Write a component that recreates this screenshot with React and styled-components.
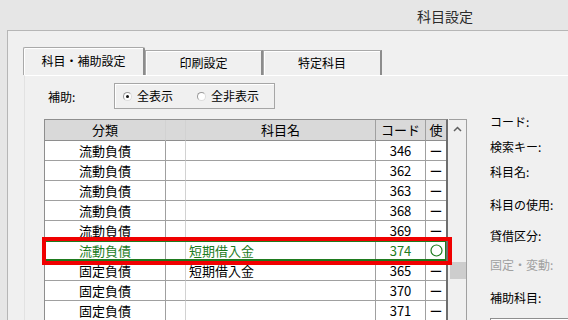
import React from 'react';
import styled, { createGlobalStyle } from 'styled-components';

const GlobalStyle = createGlobalStyle`
  html, body {
    margin: 0;
    padding: 0;
    background: #e6e6e6;
  }
`

const Frame = styled.div`
  width: 568px;
  height: 320px;
  overflow: hidden;
  display: flex;
  flex-direction: column;
  background: #e6e6e6;
  font-family: "Noto Sans CJK JP", "Noto Sans", sans-serif;
  color: #000;
`

const TitleBar = styled.div`
  height: 30px;
  flex: none;
  display: flex;
  align-items: center;
  justify-content: flex-end;
  padding: 2px 95px 0 0;
  box-sizing: border-box;
  font-size: 14px;
  color: #2b2b2b;
`

const WindowBody = styled.div`
  flex: 1;
  margin-left: 7px;
  border-top: 1px solid #b6b6b6;
  border-left: 1px solid #b6b6b6;
  background: #f0f0f0;
  padding: 16px 0 0 16px;
  display: flex;
  flex-direction: column;
`

const TabStrip = styled.div`
  display: flex;
  align-items: flex-end;
  height: 28px;
  flex: none;
`

const Tab = styled.div`
  box-sizing: border-box;
  width: ${p => p.width}px;
  height: ${p => p.active ? 28 : 25}px;
  margin-left: ${p => p.active ? -1 : 0}px;
  background: #f0f0f0;
  border: 1px solid #a9a9a9;
  border-bottom: none;
  border-right: 2px solid #8c8c8c;
  box-shadow: inset 1px 1px 0 #fff;
  border-radius: ${p => p.active ? '2px 2px 0 0' : '0'};
  display: flex;
  align-items: center;
  justify-content: center;
  font-size: 12px;
  line-height: 16px;
  padding-bottom: ${p => p.active ? 2 : 0}px;
  position: relative;
  z-index: ${p => p.active ? 1 : 0};
`

const TabPanel = styled.div`
  flex: 1;
  display: flex;
  border-top: 1px solid #fff;
  border-left: 1px solid #e2e2e2;
  padding: 7px 0 0 19px;
  background: #f0f0f0;
`

const LeftColumn = styled.div`
  display: flex;
  flex-direction: column;
`

const FilterRow = styled.div`
  display: flex;
  align-items: center;
  height: 26px;
  margin-bottom: 10px;
  font-size: 12px;
`

const FilterLabel = styled.span`
  width: 70px;
  padding-left: 4px;
  box-sizing: border-box;
`

const RadioGroup = styled.div`
  box-sizing: border-box;
  width: 161px;
  height: 26px;
  border: 1px solid #a6a6a6;
  box-shadow: inset 1px 1px 0 #fff;
  display: flex;
  align-items: center;
  padding-left: 8px;
  gap: 24px;
`

const RadioItem = styled.label`
  display: flex;
  align-items: center;
  gap: 5px;
  line-height: 16px;
`

const RadioDot = styled.span`
  box-sizing: border-box;
  width: 9px;
  height: 9px;
  border-radius: 50%;
  border: 1px solid #9a9a9a;
  border-bottom-color: #dcdcdc;
  border-right-color: #dcdcdc;
  background: #fff;
  display: flex;
  align-items: center;
  justify-content: center;

  &::after {
    content: '';
    width: 3px;
    height: 3px;
    border-radius: 50%;
    background: ${p => p.checked ? '#111' : 'transparent'};
  }
`

const GridWrap = styled.div`
  display: flex;
  align-items: stretch;
  flex: 1;
`

const Table = styled.div`
  width: 404px;
  box-sizing: border-box;
  border-top: 1px solid #8e8e8e;
  border-left: 1px solid #8e8e8e;
  border-right: 2px solid #6e6e6e;
  display: flex;
  flex-direction: column;
`

const Row = styled.div`
  display: grid;
  grid-template-columns: 121px 20px 190px 50px 20px;
  height: ${p => p.header ? 21 : 20}px;
  background: ${p => p.header ? '#d9d9d9' : '#fff'};
  color: ${p => p.selected ? '#1e7b1e' : '#000'};
  position: relative;
  font-size: 13px;

  ${p => p.selected && `
    &::before {
      content: '';
      position: absolute;
      left: 0;
      top: 0;
      right: 0;
      bottom: 0;
      border: 1px solid #1e7b1e;
      border-bottom-width: 2px;
      pointer-events: none;
    }
  `}
`

const Cell = styled.div`
  box-sizing: border-box;
  border-bottom: 1px solid ${p => p.header ? '#8e8e8e' : '#a0a0a0'};
  border-right: ${p => p.last ? 'none' : `1px solid ${p.light ? '#d2d2d2' : '#a0a0a0'}`};
  display: flex;
  align-items: center;
  justify-content: ${p => p.align === 'left' ? 'flex-start' : 'center'};
  padding-left: ${p => p.align === 'left' ? 3 : 0}px;
  line-height: 16px;
  white-space: nowrap;
  overflow: hidden;
`

const Annotation = styled.div`
  position: absolute;
  left: -3px;
  top: -4px;
  right: -6px;
  bottom: -4px;
  border: 4px solid #f00000;
  pointer-events: none;
  z-index: 2;
`

const ScrollBar = styled.div`
  width: 18px;
  box-sizing: border-box;
  border-top: 1px solid #a0a0a0;
  border-right: 1px solid #a0a0a0;
  margin-left: 1px;
  background: #f0f0f0;
  display: flex;
  flex-direction: column;
`

const ScrollButton = styled.div`
  height: 17px;
  display: flex;
  align-items: center;
  justify-content: center;
  color: #606060;
`

const ScrollThumb = styled.div`
  height: 17px;
  margin: ${p => p.offset}px 0 0 1px;
  background: #cdcdcd;
`

const FieldColumn = styled.div`
  display: flex;
  flex-direction: column;
  margin-left: 23px;
  padding-top: 31px;
  font-size: 12px;
`

const FieldLabel = styled.div`
  line-height: 16px;
  margin-top: ${p => p.gap}px;
  color: ${p => p.disabled ? '#a0a0a0' : '#000'};
  white-space: nowrap;
`

const FieldBox = styled.div`
  margin-top: 12px;
  width: 90px;
  height: 20px;
  border-top: 1px solid #8e8e8e;
  border-left: 1px solid #8e8e8e;
  background: #fff;
`

const rows = [
  { kind: '流動負債', name: '', code: '346', used: false },
  { kind: '流動負債', name: '', code: '362', used: false },
  { kind: '流動負債', name: '', code: '363', used: false },
  { kind: '流動負債', name: '', code: '368', used: false },
  { kind: '流動負債', name: '', code: '369', used: false },
  { kind: '流動負債', name: '短期借入金', code: '374', used: true, selected: true },
  { kind: '固定負債', name: '短期借入金', code: '365', used: false },
  { kind: '固定負債', name: '', code: '370', used: false },
  { kind: '固定負債', name: '', code: '371', used: false },
];

const fields = [
  { label: 'コード:', gap: 0 },
  { label: '検索キー:', gap: 9 },
  { label: '科目名:', gap: 9 },
  { label: '科目の使用:', gap: 17 },
  { label: '貸借区分:', gap: 15 },
  { label: '固定・変動:', gap: 13, disabled: true },
  { label: '補助科目:', gap: 17 },
];

function UsedMark({ used }) {
  if (!used) return 'ー';
  return (
    <svg width="13" height="13" viewBox="0 0 13 13">
      <circle cx="6.5" cy="6.5" r="5.5" fill="none" stroke="#1e7b1e" strokeWidth="1.2" />
    </svg>
  );
}

export default function App() {
  return (
    <Frame>
      <GlobalStyle />
      <TitleBar>科目設定</TitleBar>
      <WindowBody>
        <TabStrip>
          <Tab active width={122}>科目・補助設定</Tab>
          <Tab width={118}>印刷設定</Tab>
          <Tab width={119}>特定科目</Tab>
        </TabStrip>
        <TabPanel>
          <LeftColumn>
            <FilterRow>
              <FilterLabel>補助:</FilterLabel>
              <RadioGroup>
                <RadioItem><RadioDot checked />全表示</RadioItem>
                <RadioItem><RadioDot />全非表示</RadioItem>
              </RadioGroup>
            </FilterRow>
            <GridWrap>
              <Table>
                <Row header>
                  <Cell header light>分類</Cell>
                  <Cell header light></Cell>
                  <Cell header>科目名</Cell>
                  <Cell header>コード</Cell>
                  <Cell header last>使</Cell>
                </Row>
                {rows.map((r, i) => (
                  <Row key={i} selected={r.selected}>
                    <Cell>{r.kind}</Cell>
                    <Cell light></Cell>
                    <Cell align="left">{r.name}</Cell>
                    <Cell>{r.code}</Cell>
                    <Cell last><UsedMark used={r.used} /></Cell>
                    {r.selected && <Annotation />}
                  </Row>
                ))}
              </Table>
              <ScrollBar>
                <ScrollButton>
                  <svg width="9" height="6" viewBox="0 0 9 6">
                    <path d="M1 5 L4.5 1.5 L8 5" fill="none" stroke="#606060" strokeWidth="1.5" />
                  </svg>
                </ScrollButton>
                <ScrollThumb offset={125} />
              </ScrollBar>
            </GridWrap>
          </LeftColumn>
          <FieldColumn>
            {fields.map(f => (
              <FieldLabel key={f.label} gap={f.gap} disabled={f.disabled}>{f.label}</FieldLabel>
            ))}
            <FieldBox />
          </FieldColumn>
        </TabPanel>
      </WindowBody>
    </Frame>
  );
}
